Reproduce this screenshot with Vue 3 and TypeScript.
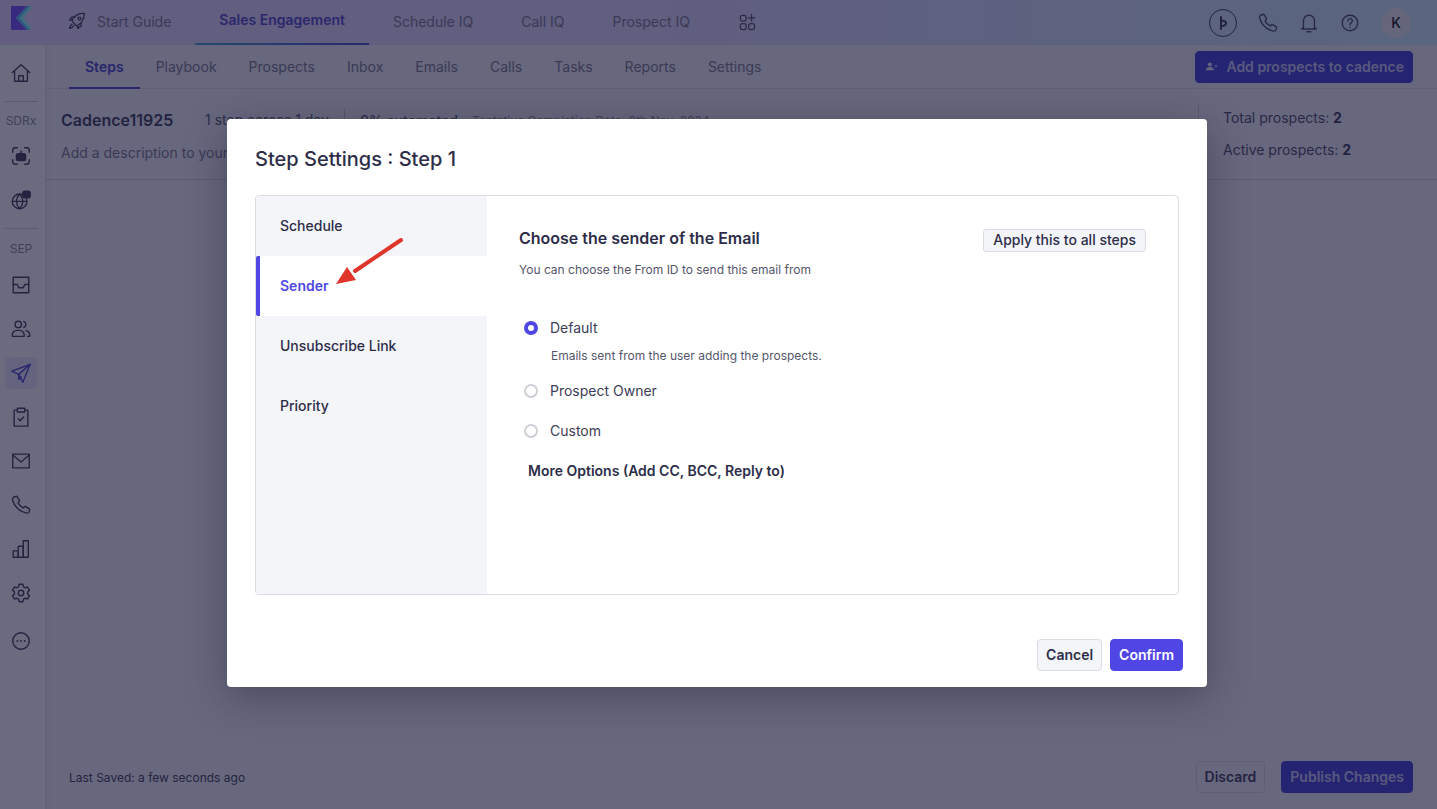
<script setup lang="ts">
const topLinks = ['Schedule IQ', 'Call IQ', 'Prospect IQ']
const tabs = ['Steps', 'Playbook', 'Prospects', 'Inbox', 'Emails', 'Calls', 'Tasks', 'Reports', 'Settings']
const settings = ['Schedule', 'Sender', 'Unsubscribe Link', 'Priority']
const sepIcons = [
  { key: 'inbox', active: false, paths: ['M3.500 3.500h17v17h-17z', 'M3.500 11.500h4.500l1.500 3.500h5l1.500-3.500h4.500'] },
  { key: 'people', active: false, paths: ['M9 3.500a3.500 3.500 0 1 0 0 7 3.500 3.500 0 0 0 0-7z', 'M15 3.700a3.500 3.500 0 0 1 0 6.600', 'M2.500 20v-1.500A5 5 0 0 1 7.500 13.500h3a5 5 0 0 1 5 5V20z', 'M17.500 13.800a5 5 0 0 1 4 4.700V20H19'] },
  { key: 'send', active: true, paths: ['M22 2.500 2 10l7.500 3.500L14 22z', 'M22 2.500 9.500 13.500v5.500l2.700-2.600'] },
  { key: 'task', active: false, paths: ['M8 4.500H4.500V22h15V4.500H16', 'M8 2.500h8v4H8z', 'm9 14 2 2 4-4'] },
  { key: 'mail', active: false, paths: ['M3 4.500h18v15H3z', 'm3 5.500 9 7.500 9-7.500'] },
  { key: 'phone', active: false, paths: ['M5 3 7.500 2.500l3 4.800-1.700 2.400c1 2.200 3.200 4.400 5.500 5.500l2.400-1.700 4.800 3-.5 2.500c-.3 1.200-1.500 2-2.800 1.800C10.500 19.500 4.500 13.500 2.700 6.300 2.500 5 3.800 3.300 5 3z'] },
  { key: 'chart', active: false, paths: ['M3.500 14h5.500v7H3.500z', 'M9 9h5.500v12H9z', 'M14.500 3h5.500v18h-5.500z'] },
  { key: 'gear', active: false, paths: ['M10 2.500h4l.7 2.800 1.700 1 2.800-.8 2 3.400-2 2.100v2l2 2.100-2 3.400-2.800-.8-1.700 1-.7 2.800h-4l-.7-2.800-1.700-1-2.800.8-2-3.400 2-2.100v-2l-2-2.100 2-3.400 2.800.8 1.700-1z', 'M12 9a3 3 0 1 0 0 6 3 3 0 0 0 0-6z'] },
]
</script>

<template>
  <div class="app">
    <header class="topbar">
      <svg class="logo" viewBox="0 0 20 24" width="20" height="24">
        <path d="M1 0H16L5 12 16 24H1a1 1 0 0 1-1-1V1a1 1 0 0 1 1-1z" fill="#7040ff" />
        <path d="M16 0h3L8.500 12 19 24h-3L5 12z" fill="#40c0ff" />
        <path d="M19 0h1v3l-8 9 8 9v3h-1L8.500 12z" fill="#80ffff" />
      </svg>
      <nav class="topnav">
        <a class="toplink guide">
          <svg class="ico20" viewBox="0 0 24 24"><path d="M9 15c-2-1-2.500-2-3-4 3-5 8-9 15-8-.5 7-4 12-9 15-2-.5-2.500-1-3-3zM6 11H3l3-4h4M13 18v3l4-3v-4M6 16c-2 1-2.500 3-3 5 2-.5 4-1 5-3" /><circle cx="15" cy="9" r="1.800" /></svg>
          <span>Start Guide</span>
        </a>
        <a class="toplink current">Sales Engagement</a>
        <a v-for="l in topLinks" :key="l" class="toplink">{{ l }}</a>
        <svg class="ico20 apps" viewBox="0 0 24 24"><rect x="4" y="4" width="7" height="7" rx="2.500" /><rect x="4" y="14" width="7" height="7" rx="2.500" /><rect x="14" y="14" width="7" height="7" rx="2.500" /><path d="M17.500 3v8M13.500 7h8" /></svg>
      </nav>
      <div class="topright">
        <span class="ring"><svg viewBox="0 0 16 16" width="16" height="16"><path d="M6 2v12" class="thick" /><path d="M6 5.500c4 0 5 1 5 2.700S9 11 6 11" class="thick" /></svg></span>
        <svg class="ico22" viewBox="0 0 24 24"><path d="M5 3 7.500 2.500l3 4.800-1.700 2.400c1 2.200 3.200 4.400 5.500 5.500l2.400-1.700 4.800 3-.5 2.500c-.3 1.200-1.500 2-2.800 1.800C10.500 19.500 4.500 13.500 2.700 6.300 2.500 5 3.800 3.300 5 3z" /></svg>
        <svg class="ico22" viewBox="0 0 24 24"><path d="M6 17V9.500a6 6 0 0 1 12 0V17l2 1.500H4zM10 21.500h4" /></svg>
        <svg class="ico22" viewBox="0 0 24 24"><circle cx="12" cy="12" r="8.500" /><path d="M9.700 9.700a2.400 2.400 0 1 1 3.800 1.900c-1 .7-1.500 1.200-1.500 2.400M12 16.500v.5" /></svg>
        <span class="avatar">K</span>
      </div>
    </header>

    <div class="body">
      <aside class="side">
        <div class="sidecell home">
          <svg class="ico22" viewBox="0 0 24 24"><path d="M2.500 11.500 12 3l9.500 8.500M5 9.500V21h14V9.500M9.500 21v-6h5v6" /></svg>
        </div>
        <div class="sidegroup">
          <span class="sidelabel">SDRx</span>
          <div class="sidecell">
            <svg class="ico22" viewBox="0 0 24 24"><path d="M3 8V6a3 3 0 0 1 3-3h2M16 3h2a3 3 0 0 1 3 3v2M21 16v2a3 3 0 0 1-3 3h-2M8 21H6a3 3 0 0 1-3-3v-2" /><rect x="7" y="9.500" width="10" height="7.500" rx="2" fill="#2c2c48" /><path d="M12 9V6.500" /></svg>
          </div>
          <div class="sidecell">
            <svg class="ico22" viewBox="0 0 24 24"><circle cx="10.500" cy="13.500" r="8" /><path d="M2.500 13.500h16M10.500 5.500c-4.500 5-4.500 11 0 16 4.500-5 4.500-11 0-16z" /><rect x="14" y="2.500" width="8" height="7" rx="2" fill="#2c2c48" /></svg>
          </div>
        </div>
        <div class="sidegroup sep">
          <span class="sidelabel">SEP</span>
          <div v-for="ic in sepIcons" :key="ic.key" class="sidecell" :class="{ on: ic.active }">
            <svg class="ico22" viewBox="0 0 24 24"><path v-for="p in ic.paths" :key="p" :d="p" /></svg>
          </div>
          <div class="sidecell more">
            <svg class="ico22" viewBox="0 0 24 24"><circle cx="12" cy="12" r="9" /><path d="M8 12h.01M12 12h.01M16 12h.01" class="thick" /></svg>
          </div>
        </div>
      </aside>

      <main class="main">
        <div class="subbar">
          <nav class="tabs">
            <a v-for="(t, i) in tabs" :key="t" class="tab" :class="{ active: i === 0 }">{{ t }}</a>
          </nav>
          <button class="btn primary add">
            <svg viewBox="0 0 16 12" width="13" height="11"><circle cx="6" cy="3.500" r="2.500" fill="#e8e8ff" /><path d="M1 10.500c0-2.500 2-4 5-4s5 1.500 5 4z" fill="#e8e8ff" /><path d="M12 5.500h3M13.500 4v3" stroke="#e8e8ff" fill="none" /></svg>
            Add prospects to cadence
          </button>
        </div>
        <section class="cadence">
          <div class="cadence-left">
            <div class="cadence-line">
              <span class="cname">Cadence11925</span>
              <span class="cmeta">1 step across 1 day</span>
              <span class="cauto">0% automated</span>
              <span class="cdate">Tentative Completion Date: 9th Nov, 2024</span>
            </div>
            <div class="cdesc">Add a description to your</div>
          </div>
          <div class="cadence-right">
            <div>Total prospects: <b>2</b></div>
            <div>Active prospects: <b>2</b></div>
          </div>
        </section>
        <footer class="foot">
          <span class="saved">Last Saved: a few seconds ago</span>
          <div class="footbtns">
            <button class="btn ghost">Discard</button>
            <button class="btn primary">Publish Changes</button>
          </div>
        </footer>
      </main>
    </div>

    <div class="overlay">
      <div class="modal">
        <h2 class="mtitle">Step Settings : Step 1</h2>
        <div class="panel">
          <ul class="menu">
            <li v-for="s in settings" :key="s" class="mitem" :class="{ sel: s === 'Sender' }">{{ s }}</li>
          </ul>
          <div class="pane">
            <div class="panehead">
              <h3>Choose the sender of the Email</h3>
              <button class="applybtn">Apply this to all steps</button>
            </div>
            <p class="panesub">You can choose the From ID to send this email from</p>
            <div class="radios">
              <div class="radio first"><i class="dot checked"></i>Default</div>
              <div class="radiodesc">Emails sent from the user adding the prospects.</div>
              <div class="radio"><i class="dot"></i>Prospect Owner</div>
              <div class="radio"><i class="dot"></i>Custom</div>
            </div>
            <div class="moreopts">More Options (Add CC, BCC, Reply to)</div>
          </div>
        </div>
        <div class="mfoot">
          <button class="mbtn cancel">Cancel</button>
          <button class="mbtn confirm">Confirm</button>
        </div>
        <svg class="arrow" viewBox="0 0 80 60" width="80" height="60">
          <path d="M73 5 27 36" stroke="#e0352b" stroke-width="4" stroke-linecap="round" fill="none" />
          <path d="M8 49 19 32 28 45z" fill="#e0352b" />
        </svg>
      </div>
    </div>
  </div>
</template>

<style>
html, body { margin: 0; padding: 0; background: #fff; }
</style>

<style scoped>
.app {
  position: relative;
  width: 1437px;
  height: 809px;
  overflow: hidden;
  display: flex;
  flex-direction: column;
  font-family: Inter, "Liberation Sans", sans-serif;
  color: #2d2d4a;
  background: #fff;
}
.topbar {
  height: 45px;
  flex: none;
  display: flex;
  align-items: center;
  padding: 0 26px 0 10px;
  box-sizing: border-box;
  background: linear-gradient(90deg, #e6daff 0%, #e0d8ff 45%, #cdeeff 100%);
}
.logo { flex: none; margin-top: -9px; margin-left: 1px; }
.topnav { display: flex; align-items: center; height: 45px; margin-left: 36px; }
.ico20, .ico22 {
  fill: none;
  stroke: #2c2c48;
  stroke-width: 1.500;
  stroke-linecap: round;
  stroke-linejoin: round;
  flex: none;
}
.ico20 { width: 20px; height: 20px; }
.ico22 { width: 22px; height: 22px; }
.thick { stroke-width: 2; fill: none; stroke: #2c2c48; stroke-linecap: round; }
.toplink {
  display: flex;
  align-items: center;
  height: 45px;
  box-sizing: border-box;
  padding: 0 24px 3px;
  font-size: 14px;
  color: #6f7085;
}
.guide { padding: 0 24px 3px 0; gap: 10px; margin-left: 0; }
.current {
  color: #4338ca;
  font-weight: 600;
  padding-bottom: 4px;
  border-bottom: 2px solid;
  border-image: linear-gradient(90deg, #2f9fd0, #4338ca) 1;
}
.apps { margin-left: 23px; margin-top: -1px; stroke: #45455f; }
.topright { margin-left: auto; display: flex; align-items: center; }
.ring {
  width: 28px;
  height: 28px;
  box-sizing: border-box;
  border: 1.500px solid #2c2c48;
  border-radius: 50%;
  display: flex;
  align-items: center;
  justify-content: center;
  margin-right: 20px;
}
.topright .ico22 { margin-right: 19px; stroke: #3c3c5a; }
.avatar {
  width: 30px;
  height: 30px;
  margin-left: 1px;
  border-radius: 50%;
  background: #eef0f3;
  display: flex;
  align-items: center;
  justify-content: center;
  font-size: 14px;
  font-weight: 500;
  color: #000;
}
.body { flex: 1; display: flex; min-height: 0; }
.side {
  width: 45px;
  flex: none;
  display: flex;
  flex-direction: column;
  align-items: center;
  background: #fff;
}
.sidecell {
  width: 32px;
  height: 32px;
  margin: 6px 0;
  border-radius: 4px;
  display: flex;
  align-items: center;
  justify-content: center;
  margin-left: -3px;
}
.sidecell.home { margin-top: 12px; margin-bottom: 12px; }
.sidecell.on { background: #eeeaff; }
.sidecell.on .ico22 { stroke: #3a33c8; }
.sidecell.more { margin-top: 10px; }
.sidegroup {
  display: flex;
  flex-direction: column;
  align-items: center;
  border-top: 1px solid #c9cad3;
  box-sizing: border-box;
  width: 33px;
  margin-left: -3px;
  padding-top: 12px;
}
.sidegroup .sidecell { margin-left: 0; }
.sidegroup.sep { margin-top: 6px; padding-top: 13px; }
.sidelabel { font-size: 12px; line-height: 14px; color: #80818f; margin-bottom: 6px; }
.sep .sidelabel { margin-bottom: 7px; }
.main {
  flex: 1;
  display: flex;
  flex-direction: column;
  background: #f4f4f8;
  box-shadow: inset 6px 0 6px -6px rgba(40, 40, 60, 0.12);
  min-width: 0;
}
.subbar {
  height: 44px;
  flex: none;
  box-sizing: border-box;
  display: flex;
  align-items: center;
  justify-content: space-between;
  padding: 0 24px;
  border-bottom: 1px solid #dcdde3;
}
.tabs { display: flex; height: 44px; }
.tab {
  display: flex;
  align-items: center;
  padding: 0 16px;
  height: 44px;
  box-sizing: border-box;
  font-size: 14px;
  color: #6f7085;
}
.tab.active {
  color: #3a33c8;
  font-weight: 600;
  padding-top: 2px;
  border-bottom: 2px solid #3a33c8;
}
.btn {
  font-family: inherit;
  font-size: 14px;
  font-weight: 600;
  height: 32px;
  box-sizing: border-box;
  border-radius: 4px;
  cursor: pointer;
  display: inline-flex;
  align-items: center;
}
.primary { background: #3430d8; color: #c8c8f8; border: 1px solid #3430d8; padding: 0 8px; }
.add { gap: 8px; padding: 0 8px 0 9px; }
.ghost { background: #f4f4f8; border: 1px solid #d8d9e0; color: #2d2d4a; padding: 0 8px; }
.foot .btn { padding-bottom: 1px; }
.cadence {
  height: 91px;
  flex: none;
  box-sizing: border-box;
  display: flex;
  border-bottom: 1px solid #cfd0d8;
}
.cadence-left { flex: 1; padding: 19px 0 0 16px; }
.cadence-line { display: flex; align-items: center; height: 24px; }
.cname { font-size: 16px; font-weight: 600; width: 144px; color: #2d2d4a; }
.cmeta { font-size: 14px; color: #4a4a62; width: 140px; box-sizing: border-box; border-right: 1px solid #b5b6c0; height: 22px; line-height: 22px; }
.cauto { font-size: 14px; font-weight: 500; margin-left: 15px; color: #4a4a62; width: 112px; }
.cdate { font-size: 12px; color: #80818f; }
.cdesc { font-size: 14px; margin-top: 12px; color: #6f7085; }
.cadence-right {
  width: 239px;
  flex: none;
  margin: 16px 0;
  padding-left: 24px;
  box-sizing: border-box;
  border-left: 1px solid #cfd0d8;
  font-size: 14px;
  color: #3d3d58;
  display: flex;
  flex-direction: column;
  gap: 15px;
}
.cadence-right div { line-height: 17px; margin-top: 4px; }
.cadence-right div + div { margin-top: 0; }
.cadence-right b { font-weight: 700; color: #2d2d4a; }
.foot {
  margin-top: auto;
  height: 64px;
  box-sizing: border-box;
  flex: none;
  display: flex;
  align-items: center;
  justify-content: space-between;
  padding: 0 24px;
}
.saved { font-size: 12px; color: #2d2d4a; }
.footbtns { display: flex; gap: 16px; }
.overlay {
  position: absolute;
  inset: 0;
  background: rgba(30, 30, 60, 0.66);
  display: flex;
  align-items: flex-start;
  padding: 119px 0 0 227px;
  box-sizing: border-box;
}
.modal {
  position: relative;
  width: 980px;
  height: 568px;
  box-sizing: border-box;
  background: #fff;
  border-radius: 4px;
  padding: 0 24px 0 28px;
  display: flex;
  flex-direction: column;
  box-shadow: 0 10px 40px rgba(20, 20, 40, 0.35);
}
.mtitle {
  margin: 27px 0 0;
  font-size: 20px;
  line-height: 26px;
  font-weight: 500;
  color: #2d2d4a;
}
.panel {
  margin: 23px 4px 0 0;
  height: 400px;
  box-sizing: border-box;
  border: 1px solid #dcdde3;
  border-radius: 4px;
  display: flex;
  overflow: hidden;
}
.menu {
  width: 231px;
  flex: none;
  margin: 0;
  padding: 0;
  list-style: none;
  background: #f4f5f8;
}
.mitem {
  height: 60px;
  display: flex;
  align-items: center;
  padding: 0 0 2px 24px;
  font-size: 14px;
  font-weight: 500;
  color: #2d2d4a;
  box-sizing: border-box;
}
.mitem.sel {
  background: #fff;
  color: #4f46e5;
  font-weight: 600;
  border-left: 4px solid #4f46e5;
  padding-left: 20px;
  border-radius: 2px 0 0 2px;
}
.pane { flex: 1; padding: 32px 32px 0; box-sizing: border-box; }
.panehead { display: flex; justify-content: space-between; align-items: center; height: 24px; }
.panehead h3 { margin: -4px 0 0; font-size: 16px; font-weight: 600; color: #2d2d4a; }
.applybtn {
  font-family: inherit;
  font-size: 14px;
  font-weight: 500;
  height: 23px;
  padding: 0 9px 1px;
  background: #f4f5f8;
  border: 1px solid #dcdde3;
  border-radius: 3px;
  color: #2d2d4a;
}
.panesub { margin: 10px 0 0; font-size: 12px; line-height: 16px; color: #55566b; }
.radios { margin-top: 39px; }
.radio {
  display: flex;
  align-items: center;
  height: 20px;
  font-size: 14px;
  color: #3d3d58;
  margin-top: 20px;
}
.radio.first { margin-top: 0; }
.dot {
  width: 14px;
  height: 14px;
  margin: 2px 12px 0 5px;
  box-sizing: border-box;
  border: 2px solid #cfd0d6;
  border-radius: 50%;
  background: #fff;
  flex: none;
}
.dot.checked { border: 4px solid #4f46e5; }
.radiodesc { margin: 11px 0 0 32px; font-size: 12px; line-height: 16px; color: #55566b; }
.radiodesc + .radio { margin-top: 16px; }
.moreopts { margin: 21px 0 0 9px; font-size: 14px; line-height: 20px; font-weight: 600; color: #2d2d4a; }
.mfoot {
  margin-top: 44px;
  display: flex;
  justify-content: flex-end;
  gap: 8px;
}
.mbtn {
  font-family: inherit;
  font-size: 14px;
  font-weight: 600;
  height: 32px;
  padding: 0 8px 2px;
  box-sizing: border-box;
  border-radius: 4px;
}
.cancel { background: #f4f5f8; border: 1px solid #dcdde3; color: #2d2d4a; }
.confirm { background: #4f46e5; border: 1px solid #4f46e5; color: #fff; }
.arrow { position: absolute; left: 101px; top: 116px; }
</style>
